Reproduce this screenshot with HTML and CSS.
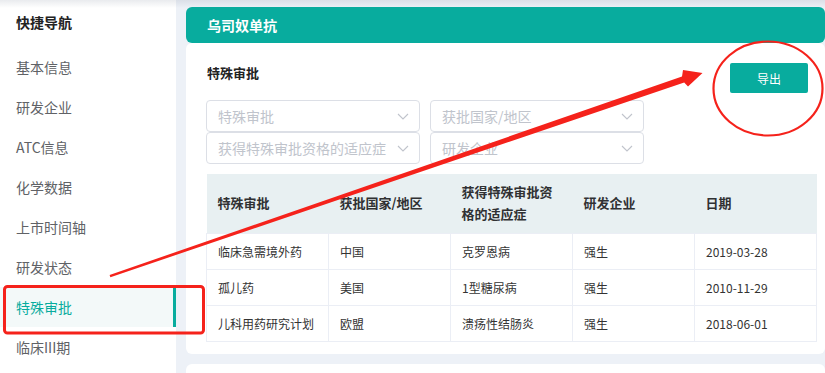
FILE: index.html
```html
<!DOCTYPE html>
<html lang="zh">
<head>
<meta charset="utf-8">
<title>乌司奴单抗 - 特殊审批</title>
<link rel="stylesheet" href="styles.css">
</head>
<body>
<div class="page">
  <aside class="sidebar">
    <div class="nav-title">快捷导航</div>
    <ul class="nav-list">
      <li class="nav-item">基本信息</li>
      <li class="nav-item">研发企业</li>
      <li class="nav-item">ATC信息</li>
      <li class="nav-item">化学数据</li>
      <li class="nav-item">上市时间轴</li>
      <li class="nav-item">研发状态</li>
      <li class="nav-item active">特殊审批</li>
      <li class="nav-item">临床III期</li>
    </ul>
  </aside>
  <main class="main">
    <div class="drug-header">乌司奴单抗</div>
    <section class="card">
      <div class="card-head">
        <h2 class="card-title">特殊审批</h2>
        <button class="btn-export">导出</button>
      </div>
      <div class="filters">
        <div class="select"><span class="ph">特殊审批</span><svg class="chev" viewBox="0 0 12 7"><path d="M1 1l5 5 5-5"/></svg></div>
        <div class="select"><span class="ph">获批国家/地区</span><svg class="chev" viewBox="0 0 12 7"><path d="M1 1l5 5 5-5"/></svg></div>
        <div class="select"><span class="ph">获得特殊审批资格的适应症</span><svg class="chev" viewBox="0 0 12 7"><path d="M1 1l5 5 5-5"/></svg></div>
        <div class="select"><span class="ph">研发企业</span><svg class="chev" viewBox="0 0 12 7"><path d="M1 1l5 5 5-5"/></svg></div>
      </div>
      <table class="data">
        <thead>
          <tr><th>特殊审批</th><th>获批国家/地区</th><th>获得特殊审批资格的适应症</th><th>研发企业</th><th>日期</th></tr>
        </thead>
        <tbody>
          <tr><td>临床急需境外药</td><td>中国</td><td>克罗恩病</td><td>强生</td><td>2019-03-28</td></tr>
          <tr><td>孤儿药</td><td>美国</td><td>1型糖尿病</td><td>强生</td><td>2010-11-29</td></tr>
          <tr><td>儿科用药研究计划</td><td>欧盟</td><td>溃疡性结肠炎</td><td>强生</td><td>2018-06-01</td></tr>
        </tbody>
      </table>
    </section>
    <section class="card next"></section>
  </main>
</div>
<svg class="annot" viewBox="0 0 825 373" width="825" height="373">
  <polygon points="109.6,275 682,76.5 683,70 702.5,73 688,86.5 684.2,82.5 110.4,277.2" fill="#f5221b"/>
  <ellipse cx="768" cy="88.5" rx="54.5" ry="47" fill="none" stroke="#f5221b" stroke-width="2.2"/>
  <rect x="4.5" y="286.5" width="199" height="46.5" rx="3" fill="none" stroke="#f5221b" stroke-width="3"/>
</svg>
</body>
</html>
```
FILE: styles.css
```css
* { box-sizing: border-box; }
html, body { margin: 0; padding: 0; }
body {
  width: 825px;
  height: 373px;
  overflow: hidden;
  background: #edf1f7;
  font-family: "Noto Sans CJK SC", "Noto Sans", sans-serif;
  position: relative;
}
body::before {
  content: "";
  position: absolute;
  left: 0; top: 0; right: 0;
  height: 8px;
  background: linear-gradient(rgba(120,130,150,0.16), rgba(120,130,150,0));
  z-index: 2;
}
.page {
  display: flex;
  align-items: flex-start;
  height: 373px;
  overflow: hidden;
}
.sidebar {
  width: 176px;
  flex: none;
  height: 373px;
  overflow: hidden;
  background: #fff;
}
.nav-title {
  height: 47px;
  padding-left: 16px;
  line-height: 45px;
  font-size: 14px;
  font-weight: bold;
  color: #222;
}
.nav-list { list-style: none; margin: 0; padding: 0; }
.nav-item {
  height: 40px;
  line-height: 40px;
  padding-left: 16px;
  font-size: 14px;
  color: #606266;
}
.nav-item.active {
  background: #f3f9f9;
  color: #08ac9e;
  border-right: 3px solid #08ac9e;
}
.main {
  flex: 1;
  height: 373px;
  overflow: hidden;
  margin-left: 10px;
  padding-top: 7px;
  display: flex;
  flex-direction: column;
}
.drug-header {
  height: 36px;
  flex: none;
  line-height: 36px;
  background: #08ac9e;
  border-radius: 6px;
  padding-left: 21px;
  color: #fff;
  font-size: 14px;
  font-weight: bold;
}
.card {
  flex: none;
  background: #fff;
  border-radius: 6px;
  padding: 20px 8px 12px 20px;
}
.card.next {
  margin-top: 10px;
  height: 11px;
  padding: 0;
  border-radius: 6px 6px 0 0;
}
.card-head {
  display: flex;
  justify-content: space-between;
  align-items: flex-start;
  height: 30px;
}
.card-title {
  margin: 0 0 0 1px;
  font-size: 13px;
  line-height: 20px;
  font-weight: bold;
  color: #222;
}
.btn-export {
  width: 78px;
  height: 30px;
  margin-right: 9px;
  border: none;
  border-radius: 2px;
  background: #08ac9e;
  color: #fff;
  font-family: inherit;
  font-size: 12px;
  padding: 0;
}
.filters {
  margin-top: 7px;
  display: grid;
  grid-template-columns: 214px 214px;
  column-gap: 10px;
  row-gap: 0;
}
.select {
  height: 32px;
  border: 1px solid #dcdfe6;
  border-radius: 4px;
  display: flex;
  align-items: center;
  justify-content: space-between;
  padding: 0 10px 0 11px;
}
.ph {
  font-size: 14px;
  color: #c0c4cc;
  white-space: nowrap;
}
.chev {
  width: 12px;
  height: 7px;
  flex: none;
  fill: none;
  stroke: #c0c4cc;
  stroke-width: 1.1;
}
.data {
  margin-top: 10px;
  width: 611px;
  table-layout: fixed;
  border-collapse: collapse;
  font-size: 12px;
}
.data th {
  background: #e8f0f2;
  text-align: left;
  font-size: 13px;
  font-weight: bold;
  color: #303133;
  line-height: 22px;
  padding: 7px 11px 8px;
  height: 59px;
  vertical-align: middle;
}
.data td {
  border: 1px solid #ebeef5;
  padding: 7px 11px;
  line-height: 21px;
  height: 36px;
  color: #333;
}
.annot {
  position: absolute;
  left: 0;
  top: 0;
  z-index: 5;
  pointer-events: none;
}
```
